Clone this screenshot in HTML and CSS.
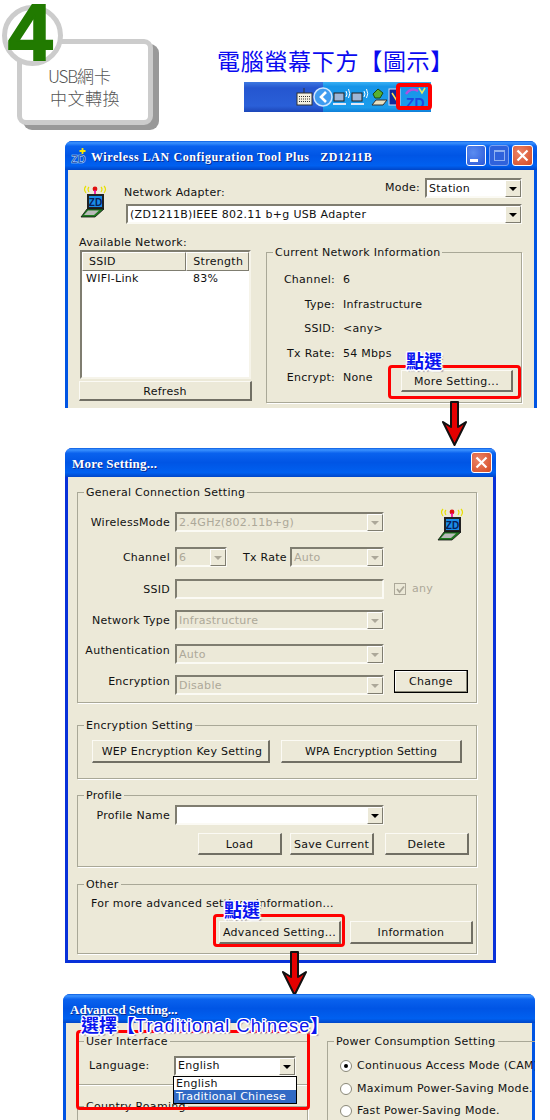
FILE: index.html
```html
<!DOCTYPE html>
<html lang="zh-Hant">
<head>
<meta charset="utf-8">
<title>USB網卡中文轉換</title>
<link rel="stylesheet" href="styles.css">
</head>
<body>
<svg class="defs" width="0" height="0" aria-hidden="true">
  <defs>
    <symbol id="laptop" viewBox="0 0 30 34">
      <path d="M6 2Q3 5 6 9M9 3Q7 5 9 8M24 2Q27 5 24 9M21 3Q23 5 21 8" fill="none" stroke="#e8e000" stroke-width="1.2"/>
      <circle cx="15" cy="5" r="2.4" fill="#e01010"/>
      <rect x="14.2" y="6" width="1.6" height="4" fill="#f000a0"/>
      <rect x="7" y="10" width="17" height="15" fill="#222"/>
      <rect x="9" y="12" width="13" height="11" fill="#1a8ce8"/>
      <text x="15.5" y="21.5" text-anchor="middle" class="zd-text" font-size="10" fill="#08205a">ZD</text>
      <path d="M7 25H21L24 25 15 33H1Z" fill="#1f7a1f" stroke="#111" stroke-width="0.8"/>
      <path d="M8 26.5H19L14 31H4Z" fill="#bbb"/>
    </symbol>
  </defs>
</svg>

<main class="page">
  <header class="hero">
    <section class="badge">
      <span class="badge-circle"></span>
      <span class="badge-num">4</span>
      <p class="badge-text"><span class="badge-usb">USB</span>網卡<br><span class="badge-l2">中文轉換</span></p>
    </section>
    <section class="hero-right">
      <h1 class="hero-title">電腦螢幕下方【圖示】</h1>
      <div class="tray">
        <svg class="tray-art" width="187" height="30" viewBox="0 0 187 30" aria-hidden="true">
          <rect x="53" y="11" width="15" height="12" fill="#f4f0e0" stroke="#333" stroke-width="1"/>
          <path d="M55 14.5H66M55 17H66M55 19.5H66" stroke="#333" stroke-width="1" stroke-dasharray="1 1"/>
          <path d="M60 6V11" stroke="#333"/>
          <circle cx="79" cy="15" r="9" fill="#3f9cf0" stroke="#cfe6ff" stroke-width="1.5"/>
          <path d="M82 10L77 15 82 20" fill="none" stroke="#fff" stroke-width="2.6"/>
          <rect x="90" y="11" width="10" height="8" fill="#9fb6d6" stroke="#222"/>
          <path d="M89 22H102" stroke="#dfe8f8" stroke-width="2"/>
          <path d="M102 9Q104 12 102 15M104.500 7Q107 12 104.500 16" fill="none" stroke="#fff"/>
          <rect x="108" y="11" width="10" height="8" fill="#9fb6d6" stroke="#222"/>
          <path d="M107 22H120" stroke="#dfe8f8" stroke-width="2"/>
          <path d="M120 9Q122 12 120 15M122.500 7Q125 12 122.500 16" fill="none" stroke="#fff"/>
          <path d="M129 12L134 7 139 11 136 16 131 16Z" fill="#58b030" stroke="#1a4a10"/>
          <path d="M132 18H143L139 23H128Z" fill="#e8e0c0" stroke="#333"/>
          <rect x="145" y="7" width="11" height="16" fill="#102a9a" stroke="#dde"/>
          <path d="M148 11L153 19" stroke="#ffe050" stroke-width="1.500"/>
          <path d="M162 12Q167 5 174 9" fill="none" stroke="#b050e0" stroke-width="2.400"/>
          <path d="M175 6L178 11 181 6" fill="none" stroke="#e8e860" stroke-width="1.500"/>
          <text x="162" y="26" class="zd-text" font-size="14" fill="#1a48e0">ZD</text>
        </svg>
        <span class="tray-mark"></span>
      </div>
    </section>
  </header>

  <!-- First window -->
  <article class="win win-config">
    <div class="titlebar">
      <svg class="title-icon" width="16" height="18" viewBox="0 0 16 18" aria-hidden="true">
        <text x="0" y="16" class="zd-text" font-size="11" fill="#0a2a90" stroke="#bfe0ff" stroke-width="0.5">ZD</text>
        <path d="M11.500 1V7M8.500 4H14.500" stroke="#ffe600" stroke-width="1.800"/>
      </svg>
      <span class="title-text title-config">Wireless LAN Configuration Tool Plus&nbsp;&nbsp; ZD1211B</span>
      <div class="title-btns">
        <span class="tbtn tbtn-blue"><i class="min-bar"></i></span>
        <span class="tbtn tbtn-blue tbtn-off"><i class="max-box"></i></span>
        <span class="tbtn tbtn-close"><svg width="13" height="13" viewBox="0 0 13 13" aria-hidden="true"><path d="M1.500 1.500L11.500 11.500M11.500 1.500L1.500 11.500" stroke="#fff" stroke-width="2.200"/></svg></span>
      </div>
    </div>
    <div class="body body-config">
      <div class="cfg-head">
        <svg class="cfg-icon" width="30" height="34" aria-hidden="true"><use href="#laptop"/></svg>
        <div class="cfg-fields">
          <div class="cfg-line">
            <span class="cfg-adapter-label">Network Adapter:</span>
            <div class="cfg-mode">
              <span>Mode:</span>
              <div class="select w-97"><span class="select-val">Station</span><span class="arrow-btn"></span></div>
            </div>
          </div>
          <div class="select cfg-adapter"><span class="select-val">(ZD1211B)IEEE 802.11 b+g USB Adapter</span><span class="arrow-btn"></span></div>
        </div>
      </div>
      <div class="cfg-main">
        <div class="cfg-left">
          <div class="list-label">Available Network:</div>
          <div class="list">
            <div class="list-head"><span class="lh lh-a">SSID</span><span class="lh lh-b">Strength</span></div>
            <div class="list-row"><span class="lc-a">WIFI-Link</span><span>83%</span></div>
          </div>
          <button class="btn refresh-btn" type="button">Refresh</button>
        </div>
        <fieldset class="group group-info">
          <legend>Current Network Information</legend>
          <div class="info-grid">
            <span class="info-k">Channel:</span><span>6</span>
            <span class="info-k">Type:</span><span>Infrastructure</span>
            <span class="info-k">SSID:</span><span>&lt;any&gt;</span>
            <span class="info-k">Tx Rate:</span><span>54 Mbps</span>
            <span class="info-k">Encrypt:</span>
            <span class="info-last"><span>None</span><button class="btn more-btn" type="button">More Setting...</button></span>
          </div>
        </fieldset>
      </div>
    </div>
    <span class="mark mark-more"></span>
    <span class="callout callout-more">點選</span>
  </article>

  <svg class="arrow arrow-a" width="26" height="46" viewBox="-1 -1 26 46" aria-hidden="true"><path d="M8 0H15V25L23 20 11.500 43 0 20 8 25Z" fill="#e40000" stroke="#111" stroke-width="2" stroke-linejoin="round"/></svg>

  <!-- Second window -->
  <article class="win win-more">
    <div class="titlebar">
      <span class="title-text title-more">More Setting...</span>
      <div class="title-btns">
        <span class="tbtn tbtn-close"><svg width="13" height="13" viewBox="0 0 13 13" aria-hidden="true"><path d="M1.500 1.500L11.500 11.500M11.500 1.500L1.500 11.500" stroke="#fff" stroke-width="2.200"/></svg></span>
      </div>
    </div>
    <div class="body body-more">
      <fieldset class="group group-general">
        <legend>General Connection Setting</legend>
        <div class="general-grid">
          <div class="row">
            <label class="row-k">WirelessMode</label>
            <div class="select is-off w-209"><span class="select-val">2.4GHz(802.11b+g)</span><span class="arrow-btn"></span></div>
            <svg class="gen-icon" width="30" height="34" aria-hidden="true"><use href="#laptop"/></svg>
          </div>
          <div class="row">
            <label class="row-k">Channel</label>
            <div class="select is-off w-52"><span class="select-val">6</span><span class="arrow-btn"></span></div>
            <label class="tx-label">Tx Rate</label>
            <div class="select is-off w-94"><span class="select-val">Auto</span><span class="arrow-btn"></span></div>
          </div>
          <div class="row">
            <label class="row-k">SSID</label>
            <div class="select is-off w-209"><span class="select-val"></span></div>
            <span class="check"><svg width="9" height="9" viewBox="0 0 9 9" aria-hidden="true"><path d="M1 4L3.500 7 8 1.500" fill="none" stroke="#aca899" stroke-width="1.800"/></svg></span>
            <span class="any-label">any</span>
          </div>
          <div class="row">
            <label class="row-k">Network Type</label>
            <div class="select is-off w-209"><span class="select-val">Infrastructure</span><span class="arrow-btn"></span></div>
          </div>
          <div class="row">
            <label class="row-k lift">Authentication</label>
            <div class="select is-off w-209"><span class="select-val">Auto</span><span class="arrow-btn"></span></div>
          </div>
          <div class="row">
            <label class="row-k lift">Encryption</label>
            <div class="select is-off w-209"><span class="select-val">Disable</span><span class="arrow-btn"></span></div>
            <button class="btn change-btn" type="button">Change</button>
          </div>
        </div>
      </fieldset>

      <fieldset class="group group-enc">
        <legend>Encryption Setting</legend>
        <div class="enc-row">
          <button class="btn wep-btn" type="button">WEP Encryption Key Setting</button>
          <button class="btn wpa-btn" type="button">WPA Encryption Setting</button>
        </div>
      </fieldset>

      <fieldset class="group group-profile">
        <legend>Profile</legend>
        <div class="row profile-row">
          <label class="row-k">Profile Name</label>
          <div class="select w-209"><span class="select-val"></span><span class="arrow-btn"></span></div>
        </div>
        <div class="profile-btns">
          <button class="btn pbtn" type="button">Load</button>
          <button class="btn pbtn" type="button">Save Current</button>
          <button class="btn pbtn pbtn-del" type="button">Delete</button>
        </div>
      </fieldset>

      <fieldset class="group group-other">
        <legend>Other</legend>
        <p class="other-text">For more advanced settings information...</p>
        <div class="other-btns">
          <button class="btn adv-btn" type="button">Advanced Setting...</button>
          <button class="btn info-btn" type="button">Information</button>
        </div>
      </fieldset>
    </div>
    <span class="mark mark-adv"></span>
    <span class="callout callout-adv">點選</span>
  </article>

  <svg class="arrow arrow-b" width="26" height="46" viewBox="-1 -1 26 46" aria-hidden="true"><path d="M8 0H15V25L23 20 11.500 43 0 20 8 25Z" fill="#e40000" stroke="#111" stroke-width="2" stroke-linejoin="round"/></svg>

  <!-- Third window, cut off by the bottom of the picture -->
  <article class="win win-adv">
    <div class="titlebar">
      <span class="title-text title-adv">Advanced Setting...</span>
    </div>
    <div class="body body-adv">
      <div class="adv-left">
        <fieldset class="group group-ui">
          <legend>User Interface</legend>
          <div class="row lang-row">
            <label class="lang-label">Language:</label>
            <div class="select w-122 lang-select">
              <span class="select-val">English</span><span class="arrow-btn"></span>
              <ul class="dropdown">
                <li>English</li>
                <li class="is-picked">Traditional Chinese</li>
              </ul>
            </div>
          </div>
        </fieldset>
        <fieldset class="group group-roam">
          <legend>Country Roaming</legend>
        </fieldset>
      </div>
      <fieldset class="group group-power">
        <legend>Power Consumption Setting</legend>
        <div class="radio-row"><span class="radio is-on"></span>Continuous Access Mode (CAM)</div>
        <div class="radio-row"><span class="radio"></span>Maximum Power-Saving Mode.</div>
        <div class="radio-row"><span class="radio"></span>Fast Power-Saving Mode.</div>
      </fieldset>
    </div>
    <span class="mark mark-lang"></span>
    <span class="callout callout-lang">選擇【<span class="callout-latin">Traditional Chinese</span>】</span>
  </article>
</main>
</body>
</html>
```

FILE: styles.css
```css
* { box-sizing: border-box; }

html, body { margin: 0; padding: 0; background: #fff; }

body {
  font-family: "DejaVu Sans", sans-serif;
  font-size: 11px;
  line-height: 12px;
  letter-spacing: 0.28px;
  color: #111;
}

.defs { position: absolute; }

.page {
  position: relative;
  width: 550px;
  height: 1120px;
  overflow: hidden;
}

.zd-text { font-family: "Liberation Sans", sans-serif; font-weight: 700; letter-spacing: 0; }

/* Hero */
.hero { display: flex; padding: 39px 0 0 17px; }

.badge {
  position: relative;
  width: 136px;
  height: 86px;
  border: 5px solid #ccc;
  border-radius: 9px;
  background: #fff;
  box-shadow: 6px 5px 0 #999;
}

.badge-circle {
  position: absolute;
  left: -20px;
  top: -39px;
  width: 61px;
  height: 61px;
  border: 5px solid #ccc;
  border-radius: 50%;
  background: #fff;
}

.badge-num {
  position: absolute;
  left: -14px;
  top: -57px;
  font-family: "Liberation Sans", sans-serif;
  font-size: 80px;
  line-height: 92px;
  font-weight: 700;
  letter-spacing: 0;
  color: #217a00;
  -webkit-text-stroke: 2px #217a00;
}

.badge-text {
  margin: 21px 0 0 26px;
  font-family: "Noto Sans CJK TC", sans-serif;
  font-size: 17px;
  line-height: 22px;
  font-weight: 300;
  letter-spacing: 0;
  color: #555;
}

.badge-usb { letter-spacing: -1.2px; }
.badge-l2 { margin-left: 2px; letter-spacing: 0.5px; }

.hero-right { margin-left: 64px; }

.hero-title {
  margin: 6px 0 0;
  font-family: "Noto Sans CJK TC", sans-serif;
  font-size: 23px;
  line-height: 30px;
  font-weight: 400;
  letter-spacing: 0.7px;
  white-space: nowrap;
  color: #0a0af0;
}

.tray {
  position: relative;
  width: 187px;
  height: 30px;
  margin: 7px 0 0 27px;
  background:
    linear-gradient(180deg, #38b0f4 0, #1795e8 15%, #1a9cec 85%, #0f7fd8 100%) 79px 0 / 108px 100% no-repeat,
    linear-gradient(180deg, #3d78e0 0, #2556d0 20%, #2a5fd8 80%, #1c46b8 100%);
}

.tray-art { display: block; }

.tray-mark {
  position: absolute;
  left: 152px;
  top: 1px;
  width: 36px;
  height: 27px;
  border: 4px solid #f00;
  border-radius: 4px;
}

/* XP windows */
.win {
  position: absolute;
  overflow: hidden;
  border-radius: 7px 7px 0 0;
  background: #0054e3;
}

.win-config { left: 65px; top: 141px; width: 472px; height: 267px; }
.win-more { left: 65px; top: 448px; width: 431px; height: 515px; background: #0831d9; }
.win-adv { left: 63px; top: 994px; width: 472px; height: 126px; }

.titlebar {
  display: flex;
  align-items: center;
  height: 29px;
  padding: 0 4px 0 6px;
  background: linear-gradient(180deg, #0a5ce0 0, #3c93ff 6%, #0a62ee 18%, #0055e5 50%, #0060f0 85%, #0046c8 100%);
}

.title-icon { flex: none; }

.title-text {
  padding-top: 2px;
  font-family: "Liberation Serif", serif;
  font-size: 12px;
  font-weight: 700;
  color: #fff;
  white-space: nowrap;
  text-shadow: 1px 1px 0 #0a2a90;
}

.title-config { margin-left: 4px; letter-spacing: 0.58px; }
.title-more { margin-left: 1px; font-size: 13px; letter-spacing: 0.2px; }
.title-adv { margin-left: 1px; font-size: 13px; letter-spacing: 0; }

.title-btns { display: flex; gap: 3px; margin-left: auto; }

.tbtn {
  display: flex;
  align-items: center;
  justify-content: center;
  width: 20px;
  height: 21px;
  border: 1px solid #fff;
  border-radius: 3px;
}

.tbtn-blue { background: radial-gradient(circle at 35% 35%, #5a8cf0, #2a58d8); }
.tbtn-off { border-color: #7aa0f0; background: #2f62dc; }
.tbtn-close { width: 21px; background: radial-gradient(circle at 35% 35%, #ec8468, #d44a22); }

.min-bar { align-self: flex-end; width: 8px; height: 3px; margin: 0 4px 3px 0; background: #fff; }
.max-box { width: 11px; height: 11px; border: 1px solid #8fb0f0; border-top-width: 2px; }

.body {
  margin: 0 3px;
  height: calc(100% - 29px);
  background: #ece9d8;
}

/* Shared controls */
.group {
  margin: 0;
  padding: 0;
  min-width: 0;
  border: 1px solid #a9a897;
  box-shadow: 1px 1px 0 #fff;
}

.group legend {
  margin-left: 6px;
  padding: 2px 2px 0;
  line-height: 12px;
  white-space: nowrap;
}

.select {
  position: relative;
  display: flex;
  align-items: center;
  flex: none;
  height: 20px;
  border: 2px solid;
  border-color: #7f7d70 #fbfaf4 #fbfaf4 #7f7d70;
  background: #fff;
}

.select-val { flex: 1; padding: 2px 0 0 2px; white-space: nowrap; }

.arrow-btn {
  position: relative;
  flex: none;
  width: 16px;
  height: 17px;
  margin-right: -1px;
  border: 1px solid;
  border-color: #fff #7f7d70 #7f7d70 #fff;
  background: #ece9d8;
}

.arrow-btn::after {
  content: "";
  position: absolute;
  left: 3px;
  top: 6px;
  border: 4px solid transparent;
  border-top: 4px solid #000;
  border-bottom: 0;
}

.is-off { background: #ece9d8; color: #aca899; }
.is-off .arrow-btn::after { border-top-color: #aca899; }

.w-52 { width: 52px; }
.w-94 { width: 94px; }
.w-97 { width: 97px; }
.w-122 { width: 122px; }
.w-209 { width: 209px; }

.btn {
  display: block;
  margin: 0;
  padding: 2px 0 0;
  height: 23px;
  border: 1px solid;
  border-color: #fbfaf4 #716f64 #716f64 #fbfaf4;
  border-bottom-width: 2px;
  border-right-width: 2px;
  background: #ece9d8;
  font: inherit;
  letter-spacing: inherit;
  color: inherit;
  white-space: nowrap;
}

.row { display: flex; align-items: center; height: 20px; }
.row-k { flex: none; width: 92px; margin-right: 5px; padding-top: 2px; text-align: right; white-space: nowrap; }
.lift { margin-top: -8px; }

/* Overlays */
.mark { position: absolute; border: 3px solid #f00; border-radius: 4px; }
.mark-more { left: 323px; top: 224px; width: 133px; height: 34px; }
.mark-adv { left: 148px; top: 466px; width: 132px; height: 33px; }
.mark-lang { left: 13px; top: 36px; width: 234px; height: 80px; }

.callout {
  position: absolute;
  font-family: "Noto Sans CJK TC", sans-serif;
  font-size: 18px;
  line-height: 20px;
  font-weight: 700;
  letter-spacing: 0;
  color: #0a14f0;
  white-space: nowrap;
  text-shadow: 1px 0 0 #fff, -1px 0 0 #fff, 0 1px 0 #fff, 0 -1px 0 #fff, 1px 1px 0 #fff, -1px -1px 0 #fff, 1px -1px 0 #fff, -1px 1px 0 #fff, 2px 0 0 #fff, 0 2px 0 #fff, 2px 2px 1px #99a;
}

.callout-more { left: 341px; top: 209px; }
.callout-adv { left: 159px; top: 451px; }
.callout-lang { left: 18px; top: 20px; }
.callout-latin { font-family: "Liberation Sans", sans-serif; font-weight: 400; letter-spacing: 1.1px; }

.arrow { position: absolute; }
.arrow-a { left: 442px; top: 401px; }
.arrow-b { left: 282px; top: 951px; }

/* First window */
.body-config { padding: 8px 12px 0 11px; }

.cfg-head { display: flex; height: 46px; }
.cfg-icon { flex: none; margin: 6px 0 0 1px; }
.cfg-fields { flex: 1; margin-left: 14px; }
.cfg-line { display: flex; justify-content: space-between; height: 20px; }
.cfg-adapter-label { align-self: flex-end; margin-bottom: -1px; }
.cfg-mode { display: flex; align-items: center; gap: 5px; }
.cfg-adapter { margin: 6px 0 0 2px; }

.cfg-main { display: flex; gap: 14px; }
.cfg-left { flex: none; width: 173px; padding-top: 12px; }
.list-label { height: 14px; padding-top: 1px; white-space: nowrap; }

.list {
  width: 171px;
  height: 129px;
  margin-left: 1px;
  border: 2px solid;
  border-color: #7f7d70 #f6f4ea #f6f4ea #7f7d70;
  background: #fff;
}

.list-head { display: flex; height: 19px; }

.lh {
  display: flex;
  align-items: center;
  padding-left: 6px;
  border: 1px solid;
  border-color: #fff #7f7d70 #7f7d70 #fff;
  background: #ece9d8;
}

.lh-a { width: 105px; }
.lh-b { width: 63px; }

.list-row { display: flex; padding: 2px 0 0 4px; }
.lc-a { width: 107px; }

.refresh-btn { width: 173px; height: 20px; margin-top: 2px; }

.group-info { flex: none; width: 256px; height: 158px; margin-top: 21px; }

.info-grid {
  display: grid;
  grid-template-columns: 68px 1fr;
  grid-auto-rows: 12px;
  column-gap: 8px;
  row-gap: 12.5px;
  padding-top: 15px;
}

.info-k { text-align: right; }
.info-last { display: flex; align-items: flex-start; justify-content: space-between; padding-right: 8px; }
.more-btn { width: 112px; height: 22px; margin-top: -2px; }

/* Second window */
.body-more { height: calc(100% - 32px); padding: 8px 16px 0 9px; }

.general-grid {
  display: grid;
  grid-template-rows: 35px 32px 31px 34px 31px 20px;
  align-items: start;
  padding-top: 13px;
}

.group-general { height: 218px; }
.gen-icon { align-self: flex-start; flex: none; margin: -5px 0 0 53px; }
.tx-label { margin: 0 3px 0 16px; padding-top: 1px; white-space: nowrap; }
.check { display: flex; align-items: center; justify-content: center; width: 12px; height: 12px; margin-left: 10px; border: 1px solid #aca899; }
.any-label { margin-left: 6px; color: #aca899; }
.change-btn { flex: none; width: 74px; padding: 0; margin: -5px 0 0 10px; align-self: flex-start; border: 1px solid #000; box-shadow: inset -1px -1px 0 #8a8878, inset 1px 1px 0 #fff; }

.group-enc { height: 61px; margin-top: 15px; }
.enc-row { display: flex; gap: 11px; padding: 8px 0 0 14px; }
.wep-btn { width: 178px; padding-left: 3px; }
.wpa-btn { width: 181px; letter-spacing: 0.1px; }

.group-profile { height: 79px; margin-top: 9px; }
.profile-row { margin-top: 3px; }
.profile-btns { display: flex; margin-top: 8px; padding-left: 120px; gap: 8px; }
.pbtn { width: 84px; height: 22px; }
.pbtn-del { margin-left: 3px; }

.group-other { height: 77px; margin-top: 10px; }
.other-text { margin: 7px 0 0 13px; white-space: nowrap; }
.other-btns { display: flex; gap: 9px; margin-top: 11px; padding-left: 141px; }
.adv-btn { width: 122px; }
.info-btn { width: 123px; }

/* Third window */
.body-adv { display: flex; gap: 19px; padding: 11px 0 0 11px; }
.adv-left { flex: none; width: 231px; }
.group-ui { height: 51px; }
.lang-row { margin-top: 8px; padding-left: 11px; }
.lang-label { flex: none; width: 85px; white-space: nowrap; }
.lang-select .select-val { padding-top: 0; }
.group-roam { height: 40px; margin-top: 14px; }

.dropdown {
  position: absolute;
  z-index: 1;
  left: -3px;
  top: 18px;
  width: 124px;
  margin: 0;
  padding: 0;
  list-style: none;
  border: 1px solid #000;
  background: #fff;
}

.dropdown li { height: 13px; padding-left: 2px; line-height: 13px; white-space: nowrap; }
.dropdown .is-picked { background: #316ac5; color: #fff; }

.group-power { flex: none; width: 300px; height: 120px; }
.radio-row { display: flex; align-items: center; height: 22.5px; padding-left: 12px; white-space: nowrap; }
.radio-row:first-of-type { margin-top: 7px; }

.radio {
  position: relative;
  flex: none;
  width: 12px;
  height: 12px;
  margin-right: 5px;
  border: 1px solid #8a8878;
  border-radius: 50%;
  background: #fff;
}

.radio.is-on::after {
  content: "";
  position: absolute;
  left: 3px;
  top: 3px;
  width: 4px;
  height: 4px;
  border-radius: 50%;
  background: #000;
}
```
